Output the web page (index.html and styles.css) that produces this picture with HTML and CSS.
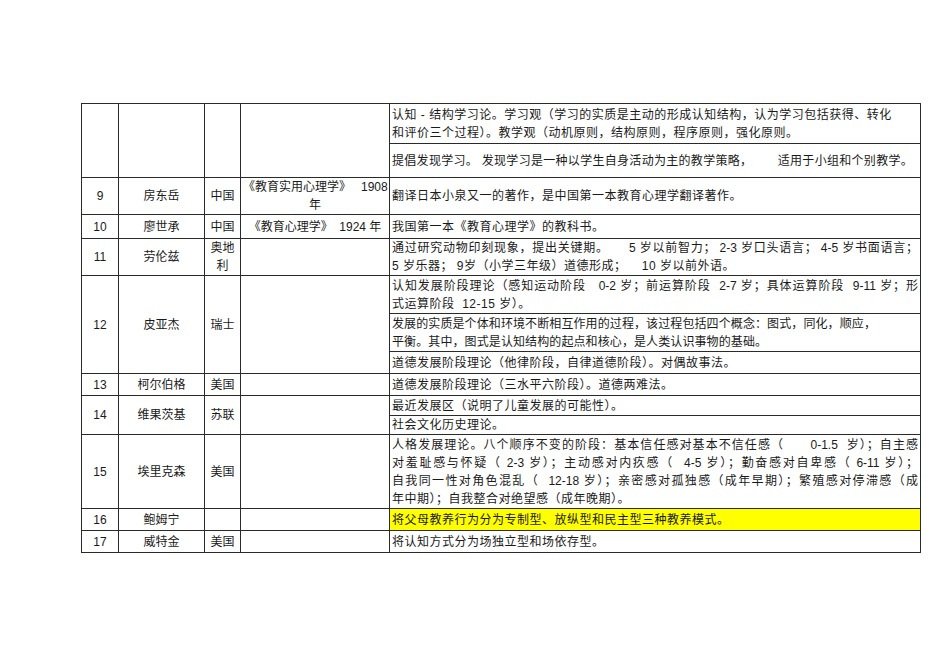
FILE: index.html
```html
<!DOCTYPE html>
<html lang="zh-CN">
<head>
<meta charset="utf-8">
<title>教育心理学人物表</title>
<link rel="stylesheet" href="styles.css">
</head>
<body>
<table class="sheet">
  <colgroup>
    <col class="c-no">
    <col class="c-name">
    <col class="c-country">
    <col class="c-book">
    <col class="c-desc">
  </colgroup>
  <tbody>
    <tr class="h40">
      <td class="ctr" rowspan="2"></td>
      <td class="ctr" rowspan="2"></td>
      <td class="ctr" rowspan="2"></td>
      <td class="ctr" rowspan="2"></td>
      <td class="desc">认知 - 结构学习论。学习观（学习的实质是主动的形成认知结构，认为学习包括获得、转化<br>和评价三个过程）。教学观（动机原则，结构原则，程序原则，强化原则。</td>
    </tr>
    <tr class="h34">
      <td class="desc oneline">提倡发现学习。 发现学习是一种以学生自身活动为主的教学策略，&nbsp;&nbsp;&nbsp;&nbsp;&nbsp;&nbsp; 适用于小组和个别教学。</td>
    </tr>
    <tr class="h37">
      <td class="ctr">9</td>
      <td class="ctr">房东岳</td>
      <td class="ctr">中国</td>
      <td class="ctr book"><span class="nowrap">《教育实用心理学》&nbsp;&nbsp; 1908</span><br>年</td>
      <td class="desc">翻译日本小泉又一的著作，是中国第一本教育心理学翻译著作。</td>
    </tr>
    <tr class="h24">
      <td class="ctr">10</td>
      <td class="ctr">廖世承</td>
      <td class="ctr">中国</td>
      <td class="ctr book"><span class="nowrap">《教育心理学》&nbsp; 1924 年</span></td>
      <td class="desc">我国第一本《教育心理学》的教科书。</td>
    </tr>
    <tr class="h36">
      <td class="ctr">11</td>
      <td class="ctr">劳伦兹</td>
      <td class="ctr">奥地<br>利</td>
      <td class="ctr"></td>
      <td class="desc"><span class="j">通过研究动物印刻现象，提出关键期。&nbsp;&nbsp;&nbsp;&nbsp; 5 岁以前智力； 2-3 岁口头语言； 4-5 岁书面语言；</span>5 岁乐器； 9岁（小学三年级）道德形成；&nbsp;&nbsp;&nbsp; 10 岁以前外语。</td>
    </tr>
    <tr class="h38">
      <td class="ctr" rowspan="3">12</td>
      <td class="ctr" rowspan="3">皮亚杰</td>
      <td class="ctr" rowspan="3">瑞士</td>
      <td class="ctr" rowspan="3"></td>
      <td class="desc"><span class="j">认知发展阶段理论（感知运动阶段&nbsp;&nbsp; 0-2 岁；前运算阶段&nbsp; 2-7 岁；具体运算阶段&nbsp; 9-11 岁；形</span>式运算阶段&nbsp; 12-15 岁）。</td>
    </tr>
    <tr class="h38">
      <td class="desc narrow">发展的实质是个体和环境不断相互作用的过程，该过程包括四个概念：图式，同化，顺应，<br>平衡。其中，图式是认知结构的起点和核心，是人类认识事物的基础。</td>
    </tr>
    <tr class="h22">
      <td class="desc">道德发展阶段理论（他律阶段，自律道德阶段）。对偶故事法。</td>
    </tr>
    <tr class="h22">
      <td class="ctr">13</td>
      <td class="ctr">柯尔伯格</td>
      <td class="ctr">美国</td>
      <td class="ctr"></td>
      <td class="desc">道德发展阶段理论（三水平六阶段）。道德两难法。</td>
    </tr>
    <tr class="h20">
      <td class="ctr" rowspan="2">14</td>
      <td class="ctr" rowspan="2">维果茨基</td>
      <td class="ctr" rowspan="2">苏联</td>
      <td class="ctr" rowspan="2"></td>
      <td class="desc">最近发展区（说明了儿童发展的可能性）。</td>
    </tr>
    <tr class="h19">
      <td class="desc">社会文化历史理论。</td>
    </tr>
    <tr class="h74">
      <td class="ctr">15</td>
      <td class="ctr">埃里克森</td>
      <td class="ctr">美国</td>
      <td class="ctr"></td>
      <td class="desc"><span class="j">人格发展理论。八个顺序不变的阶段：基本信任感对基本不信任感（&nbsp;&nbsp;&nbsp;&nbsp;&nbsp; 0-1.5&nbsp; 岁）；自主感</span><span class="j">对羞耻感与怀疑（ 2-3 岁）；主动感对内疚感（&nbsp; 4-5 岁）；勤奋感对自卑感（ 6-11 岁）；</span><span class="j">自我同一性对角色混乱（&nbsp; 12-18 岁）；亲密感对孤独感（成年早期）；繁殖感对停滞感（成</span>年中期）；自我整合对绝望感（成年晚期）。</td>
    </tr>
    <tr class="h22">
      <td class="ctr">16</td>
      <td class="ctr">鲍姆宁</td>
      <td class="ctr"></td>
      <td class="ctr"></td>
      <td class="desc hl">将父母教养行为分为专制型、放纵型和民主型三种教养模式。</td>
    </tr>
    <tr class="h22">
      <td class="ctr">17</td>
      <td class="ctr">威特金</td>
      <td class="ctr">美国</td>
      <td class="ctr"></td>
      <td class="desc">将认知方式分为场独立型和场依存型。</td>
    </tr>
  </tbody>
</table>
</body>
</html>
```
FILE: styles.css
```css
html, body {
  margin: 0;
  padding: 0;
  background: #ffffff;
}

body {
  width: 950px;
  height: 672px;
  overflow: hidden;
  font-family: "Liberation Sans", "Noto Sans CJK SC", sans-serif;
  font-size: 12px;
  color: #1a1a1a;
}

.sheet {
  margin: 103px 0 0 81px;
  width: 839px;
  border-collapse: collapse;
  table-layout: fixed;
}

.c-no { width: 37px; }
.c-name { width: 86px; }
.c-country { width: 36px; }
.c-book { width: 149px; }
.c-desc { width: 531px; }

.sheet td {
  border: 1px solid #2a2a2a;
  padding: 0 2px;
  line-height: 18px;
  vertical-align: middle;
  overflow: visible;
}

.ctr {
  text-align: center;
}

.book {
  padding: 0;
}

.nowrap {
  white-space: nowrap;
}

.desc {
  text-align: left;
  white-space: normal;
  letter-spacing: 0.5px;
}

.desc.oneline {
  white-space: nowrap;
  letter-spacing: 0.3px;
}

.desc.narrow {
  letter-spacing: 0.1px;
}

.j {
  display: block;
  text-align: justify;
  text-align-last: justify;
  letter-spacing: 0;
}

.hl {
  background: #ffff00;
}

.h40 { height: 40px; }
.h38 { height: 38px; }
.h37 { height: 37px; }
.h36 { height: 36px; }
.h34 { height: 34px; }
.h24 { height: 24px; }
.h22 { height: 22px; }
.h20 { height: 20px; }
.h19 { height: 19px; }
.h74 { height: 74px; }
```
